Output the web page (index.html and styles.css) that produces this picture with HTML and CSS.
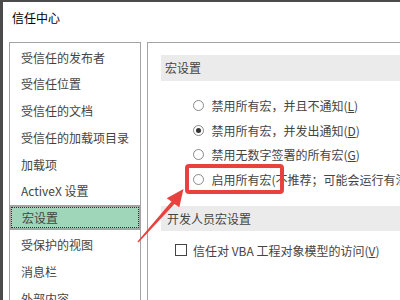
FILE: index.html
```html
<!DOCTYPE html>
<html lang="zh-CN">
  <head>
    <meta charset="UTF-8" />
    <title>信任中心</title>
    <link rel="stylesheet" href="styles.css">
  </head>
  <body>
    <div class="dialog">
      <div class="title">信任中心</div>
      <div class="content">
        <ul class="nav">
          <li>受信任的发布者</li>
          <li>受信任位置</li>
          <li>受信任的文档</li>
          <li>受信任的加载项目录</li>
          <li>加载项</li>
          <li>ActiveX 设置</li>
          <li class="selected"><span>宏设置</span></li>
          <li>受保护的视图</li>
          <li>消息栏</li>
          <li>外部内容</li>
        </ul>
        <div class="panel">
          <div class="band">宏设置</div>
          <div class="options">
            <div class="row"><span class="radio"></span>禁用所有宏，并且不通知(<u>L</u>)</div>
            <div class="row"><span class="radio checked"></span>禁用所有宏，并发出通知(<u>D</u>)</div>
            <div class="row"><span class="radio"></span>禁用无数字签署的所有宏(<u>G</u>)</div>
            <div class="row"><span class="radio"></span>启用所有宏(不推荐；可能会运行有潜在危险的代码)(<u>E</u>)</div>
          </div>
          <div class="band second">开发人员宏设置</div>
          <div class="row check-row"><span class="checkbox"></span>信任对 VBA 工程对象模型的访问(<u>V</u>)</div>
        </div>
      </div>
    </div>

    <!-- annotation drawn on top of the screenshot -->
    <svg class="marks" width="400" height="300" viewBox="0 0 400 300">
      <rect x="187" y="166" width="95" height="26" rx="2" fill="none" stroke="#e8423f" stroke-width="4" />
      <polygon fill="#e8423f" points="137.5,241.5 171.5,201.5 166.7,198.3 183.5,189 179.3,207.3 174.5,204.1 138.5,242.5" />
    </svg>
  </body>
</html>
```

FILE: styles.css
```css
* {
  margin: 0;
  padding: 0;
  box-sizing: border-box;
}
body {
  width: 400px;
  height: 300px;
  overflow: hidden;
  background-color: #4b4b4b;
  font-family: "Noto Sans CJK SC", "Noto Sans", sans-serif;
  font-size: 12px;
  color: #444;
  position: relative;
}
.dialog {
  margin: 2px 0 0 3px;
  height: 298px;
  background-color: white;
  overflow: hidden;
}
.title {
  height: 40px;
  padding: 8px 0 0 9px;
  line-height: 16px;
  color: black;
}
.content {
  display: flex;
  gap: 6px;
  padding-left: 6px;
}
.nav {
  list-style: none;
  width: 132px;
  flex-shrink: 0;
  height: 300px;
  border: 1px solid #a4a4a4;
  padding-top: 1.5px;
  display: flex;
  flex-direction: column;
  gap: 1.8px;
}
.nav li {
  height: 25px;
  line-height: 25px;
  padding-left: 11px;
  white-space: nowrap;
}
.nav li.selected {
  margin: 0 -1px;
  padding: 0;
  border: 2px solid #a4a4a4;
  background-color: #9fd5b8;
}
.nav li.selected span {
  display: block;
  height: 100%;
  line-height: 19px;
  padding-left: 10px;
  border: 1px dotted #333;
  margin: 0;
}
.panel {
  width: 300px;
  flex-shrink: 0;
  height: 300px;
  border-left: 1px solid #a4a4a4;
  border-top: 1px solid #a4a4a4;
  padding: 12px 0 0 13px;
  white-space: nowrap;
}
.band {
  height: 26px;
  line-height: 26px;
  padding-left: 4px;
  background-color: #ebebeb;
}
.band.second {
  height: 25px;
  line-height: 25px;
  padding-left: 6px;
  margin-top: 15px;
}
.options {
  margin-top: 12.4px;
  padding-left: 31.5px;
}
.row {
  height: 24.5px;
  display: flex;
  align-items: center;
}
.radio {
  width: 11px;
  height: 11px;
  border: 1px solid #8a8a8a;
  border-radius: 50%;
  margin-right: 8px;
  display: flex;
  justify-content: center;
  align-items: center;
  flex-shrink: 0;
}
.radio.checked::after {
  content: "";
  width: 5px;
  height: 5px;
  border-radius: 50%;
  background-color: #333;
}
.check-row {
  margin-top: 6.8px;
  padding-left: 14px;
}
.checkbox {
  width: 12px;
  height: 12px;
  border: 1px solid #444;
  margin-right: 6px;
  flex-shrink: 0;
}
.marks {
  position: absolute;
  left: 0;
  top: 0;
  pointer-events: none;
}
```
